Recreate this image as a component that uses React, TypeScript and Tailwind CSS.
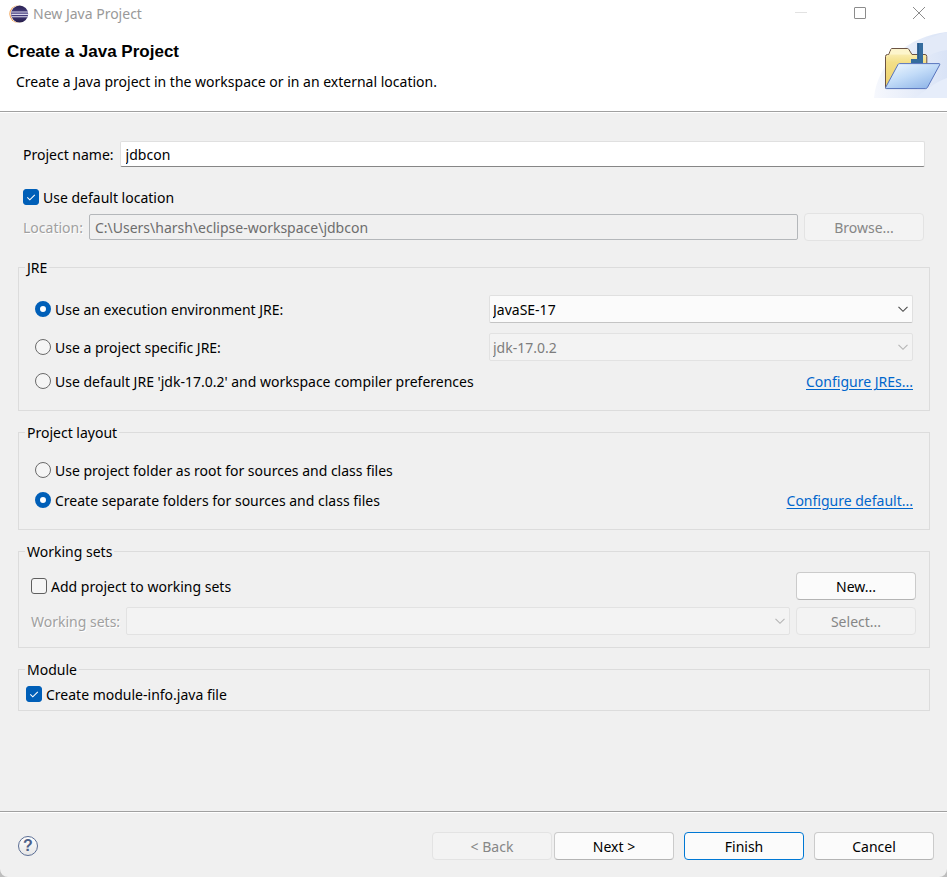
import { useState } from 'react';
import type { ButtonHTMLAttributes, InputHTMLAttributes, ReactNode, SelectHTMLAttributes } from 'react';
import clsx from 'clsx';

function EclipseIcon() {
  return (
    <svg className="h-5 w-5 shrink-0" viewBox="0 0 20 20" aria-hidden="true">
      <defs>
        <linearGradient id="sphere" x1="0" y1="0" x2="0" y2="1">
          <stop offset="0" stopColor="#2a2150" />
          <stop offset="0.5" stopColor="#4a4185" />
          <stop offset="1" stopColor="#241c48" />
        </linearGradient>
      </defs>
      <circle cx="9.2" cy="10" r="8.8" fill="#f0953c" />
      <circle cx="10.3" cy="10" r="9" fill="#fff" />
      <circle cx="10.6" cy="10" r="8.6" fill="url(#sphere)" />
      <path d="M2.4 8h16.600M2.4 10.400h16.600M2.6 12.800h16.200" stroke="#dcd9ec" strokeWidth="1.1" />
    </svg>
  );
}

function FolderBanner() {
  return (
    <svg className="h-[66px] w-[73px] shrink-0" viewBox="1 0 73 66" aria-hidden="true">
      <defs>
        <linearGradient id="wash" x1="0" y1="0" x2="1" y2="0">
          <stop offset="0" stopColor="#f6f8fd" />
          <stop offset="1" stopColor="#d9e3f6" />
        </linearGradient>
        <linearGradient id="back" x1="0" y1="0" x2="0" y2="1">
          <stop offset="0" stopColor="#fdf6cf" />
          <stop offset="0.35" stopColor="#f3df87" />
          <stop offset="1" stopColor="#edcf6a" />
        </linearGradient>
        <linearGradient id="front" x1="0" y1="0" x2="0.8" y2="1">
          <stop offset="0" stopColor="#f3faff" />
          <stop offset="0.5" stopColor="#c3dcf8" />
          <stop offset="1" stopColor="#8fb5e8" />
        </linearGradient>
      </defs>
      <path d="M1 66C4 30 36 4 74 0v66z" fill="url(#wash)" />
      <path d="M42 66c10-7 20-16 32-20v20z" fill="#e6edfa" />
      <path d="M50 10c8-5 15-8 24-10v18c-9 1-16 4-23 8z" fill="#e3eaf8" />
      <path
        d="M12.5 56V24.500q0-2 2-2h1.200l2.200-5.200q.3-.8 1-.8h15.600q.8 0 1.200.7l3.300 5.300h13q1.800 0 1.800 2V40L44 56z"
        fill="url(#back)"
        stroke="#6b5344"
      />
      <path d="M16.500 22.500l2-5.300h16l3 5.300z" fill="#fdf5cc" />
      <path d="M44.300 11H50v21H38v-5h6.300z" fill="#356c9e" />
      <path d="M44.300 11h1.500v16h-1.500z" fill="#28588a" />
      <path
        d="M26.500 31.600H66q1.200 0 .7 1.200L54.500 55.300q-.7 1.300-1.800 1.300H13.500q-1.500 0-.8-1.300L25 32.500q.5-.9 1.500-.9z"
        fill="url(#front)"
        stroke="#5874bd"
      />
    </svg>
  );
}

function Chevron({ disabled }: { disabled?: boolean }) {
  return (
    <svg
      className={clsx(
        'pointer-events-none absolute top-1/2 right-1 h-3 w-3 -translate-y-1/2',
        disabled ? 'text-[#b4b4b4]' : 'text-[#4a4a4a]'
      )}
      viewBox="0 0 12 12"
      fill="none"
      stroke="currentColor"
      aria-hidden="true"
    >
      <path d="M1.500 3.800L6 8.300l4.500-4.500" strokeWidth="1.100" />
    </svg>
  );
}

function Combo({ className, children, disabled, ...props }: SelectHTMLAttributes<HTMLSelectElement>) {
  return (
    <div className={clsx('relative', className)}>
      <select
        disabled={disabled}
        className={clsx(
          'block h-7 w-full appearance-none rounded-xs border pt-0.5 pr-6 pl-[3px] opacity-100 outline-none',
          disabled ? 'border-[#e2e2e2] bg-[#f3f3f3] text-[#7d7d7d]' : 'border-[#e0e0e0] border-b-[#c4c4c4] bg-[#fbfbfb]'
        )}
        {...props}
      >
        {children}
      </select>
      <Chevron disabled={disabled} />
    </div>
  );
}

type ToggleProps = InputHTMLAttributes<HTMLInputElement> & { label: string };

function Checkbox({ label, ...props }: ToggleProps) {
  return (
    <label className="flex h-5 items-center gap-1">
      <span className="relative flex">
        <input
          type="checkbox"
          className="peer h-4 w-4 appearance-none rounded-[3px] border border-[#5f5f5f] bg-[#f5f5f5] checked:border-[#005fb8] checked:bg-[#005fb8]"
          {...props}
        />
        <svg
          className="pointer-events-none absolute inset-0 hidden h-4 w-4 peer-checked:block"
          viewBox="0 0 16 16"
          fill="none"
          stroke="#fff"
          aria-hidden="true"
        >
          <path d="M4.300 8.300l2.500 2.500 5-5" strokeWidth="1.100" />
        </svg>
      </span>
      <span className="pt-0.5">{label}</span>
    </label>
  );
}

function Radio({ label, ...props }: ToggleProps) {
  return (
    <label className="flex h-5 items-center gap-1">
      <input
        type="radio"
        className="h-4 w-4 appearance-none rounded-full border border-[#6a6a6a] bg-[#f5f5f5] checked:border-[5px] checked:border-[#005fb8] checked:bg-white"
        {...props}
      />
      <span className="pt-0.5">{label}</span>
    </label>
  );
}

type PushButtonProps = ButtonHTMLAttributes<HTMLButtonElement> & { primary?: boolean };

function PushButton({ primary, disabled, children, ...props }: PushButtonProps) {
  return (
    <button
      type="button"
      disabled={disabled}
      className={clsx(
        'h-7 w-[120px] shrink-0 rounded border pt-0.5',
        disabled && 'border-[#e3e3e3] bg-[#f3f3f3] text-[#868686]',
        !disabled && primary && 'border-[#0078d4] bg-[#fbfbfb]',
        !disabled && !primary && 'border-[#cbcbcb] border-b-[#b4b4b4] bg-[#fbfbfb]'
      )}
      {...props}
    >
      {children}
    </button>
  );
}

function Group({ title, className, children }: { title: string; className: string; children: ReactNode }) {
  return (
    <fieldset className="min-w-0 border border-[#dcdcdc] px-1.5">
      <legend className="h-5 px-0.5 leading-[22px]">{title}</legend>
      <div className={className}>{children}</div>
    </fieldset>
  );
}

const linkClass = 'pt-0.5 text-[#0066cc] underline underline-offset-2';
const disabledLabel = 'text-[#a0a0a0] [text-shadow:1px_1px_0_#fff]';

export default function App() {
  const [name, setName] = useState('jdbcon');
  const [useDefault, setUseDefault] = useState(true);
  const [jre, setJre] = useState('env');
  const [layout, setLayout] = useState('separate');
  const [addToSets, setAddToSets] = useState(false);
  const [moduleInfo, setModuleInfo] = useState(true);

  return (
    <div className="min-h-screen bg-[#bdbdbd]">
      <div className="flex min-h-screen flex-col overflow-hidden rounded-b-lg bg-[#f0f0f0] font-['Noto_Sans','Open_Sans',sans-serif] text-[14px] leading-5 text-black">
        <header className="border-b border-[#a0a0a0] bg-white">
          <div className="flex h-7 items-center justify-between pl-[9px]">
            <div className="flex items-center gap-1 text-[#999]">
              <EclipseIcon />
              <span>New Java Project</span>
            </div>
            <div className="flex gap-[35px] pr-4 pb-0.5">
              <button type="button" aria-label="Minimize" disabled className="h-6 w-6 text-[#e2e2e2]">
                <svg className="mx-auto h-3 w-3" viewBox="0 0 12 12" stroke="currentColor">
                  <path d="M0 5.500h12" />
                </svg>
              </button>
              <button type="button" aria-label="Maximize" className="h-6 w-6 text-[#8c8c8c]">
                <svg className="mx-auto h-3 w-3" viewBox="0 0 12 12" fill="none" stroke="currentColor">
                  <rect x="0.5" y="0.5" width="11" height="11" rx="0.5" />
                </svg>
              </button>
              <button type="button" aria-label="Close" className="h-6 w-6 text-[#8c8c8c]">
                <svg className="mx-auto h-3 w-3" viewBox="0 0 12 12" fill="none" stroke="currentColor">
                  <path d="M0 0l12 12M12 0L0 12" />
                </svg>
              </button>
            </div>
          </div>
          <div className="flex items-start justify-between pt-1 pb-[13px]">
            <div className="pt-2 pl-[7px]">
              <h1 className="font-['Liberation_Sans',Arial,sans-serif] text-[17px] leading-6 font-bold">
                Create a Java Project
              </h1>
              <p className="pt-2 pl-[9px]">Create a Java project in the workspace or in an external location.</p>
            </div>
            <FolderBanner />
          </div>
        </header>

        <main className="flex-1 border-t border-white pt-7 pr-[17px] pl-[18px]">
          <div className="flex items-center gap-[6px] pr-[5px] pl-[5px]">
            <label htmlFor="project-name" className="pt-0.5">
              Project name:
            </label>
            <input
              id="project-name"
              type="text"
              value={name}
              onChange={(e) => setName(e.target.value)}
              className="h-[26px] min-w-0 flex-1 rounded-xs border border-[#e0e0e0] border-b-[#868686] bg-white px-[5px] outline-none"
            />
          </div>

          <div className="pt-5 pl-[5px]">
            <Checkbox
              label="Use default location"
              checked={useDefault}
              onChange={(e) => setUseDefault(e.target.checked)}
            />
          </div>
          <div className="flex items-center gap-[6px] pt-[6px] pr-[6px] pl-[5px]">
            <label htmlFor="location" className={clsx('pt-0.5', useDefault && disabledLabel)}>
              Location:
            </label>
            <input
              id="location"
              type="text"
              disabled={useDefault}
              defaultValue="C:\Users\harsh\eclipse-workspace\jdbcon"
              className="h-[26px] min-w-0 flex-1 rounded-xs border border-[#b4b7ba] bg-[#f0f0f0] px-[5px] text-[#6d6d6d] outline-none"
            />
            <PushButton disabled={useDefault}>Browse...</PushButton>
          </div>

          <div className="flex flex-col gap-[11px] pt-4">
            <Group title="JRE" className="px-2.5 pb-[19px]">
              <div className="grid grid-cols-[454px_1fr] items-center gap-y-[10px] pt-[18px]">
                <Radio
                  name="jre"
                  label="Use an execution environment JRE:"
                  checked={jre === 'env'}
                  onChange={() => setJre('env')}
                />
                <Combo aria-label="Execution environment" disabled={jre !== 'env'}>
                  <option>JavaSE-17</option>
                </Combo>
                <Radio
                  name="jre"
                  label="Use a project specific JRE:"
                  checked={jre === 'project'}
                  onChange={() => setJre('project')}
                />
                <Combo aria-label="Project specific JRE" disabled={jre !== 'project'}>
                  <option>jdk-17.0.2</option>
                </Combo>
                <Radio
                  name="jre"
                  label="Use default JRE 'jdk-17.0.2' and workspace compiler preferences"
                  checked={jre === 'default'}
                  onChange={() => setJre('default')}
                />
                <div className="flex h-5 items-center justify-end">
                  <a href="#jres" className={linkClass}>
                    Configure JREs...
                  </a>
                </div>
              </div>
            </Group>

            <Group title="Project layout" className="px-2.5 pb-[19px]">
              <div className="flex flex-col gap-[10px] pt-[18px]">
                <Radio
                  name="layout"
                  label="Use project folder as root for sources and class files"
                  checked={layout === 'root'}
                  onChange={() => setLayout('root')}
                />
                <div className="flex h-5 items-center justify-between">
                  <Radio
                    name="layout"
                    label="Create separate folders for sources and class files"
                    checked={layout === 'separate'}
                    onChange={() => setLayout('separate')}
                  />
                  <a href="#layout" className={linkClass}>
                    Configure default...
                  </a>
                </div>
              </div>
            </Group>

            <Group title="Working sets" className="pr-[7px] pb-3 pl-1.5">
              <div className="flex flex-col gap-[7px] pt-[11px]">
                <div className="flex items-center justify-between">
                  <Checkbox
                    label="Add project to working sets"
                    checked={addToSets}
                    onChange={(e) => setAddToSets(e.target.checked)}
                  />
                  <PushButton>New...</PushButton>
                </div>
                <div className="flex items-center gap-[6px]">
                  <label htmlFor="working-sets" className={clsx('pt-0.5', !addToSets && disabledLabel)}>
                    Working sets:
                  </label>
                  <Combo id="working-sets" className="min-w-0 flex-1" disabled={!addToSets} />
                  <PushButton disabled={!addToSets}>Select...</PushButton>
                </div>
              </div>
            </Group>

            <Group title="Module" className="px-px pb-[6px]">
              <div className="pt-[5px]">
                <Checkbox
                  label="Create module-info.java file"
                  checked={moduleInfo}
                  onChange={(e) => setModuleInfo(e.target.checked)}
                />
              </div>
            </Group>
          </div>
        </main>

        <footer className="border-t border-[#a0a0a0]">
          <div className="flex items-center justify-between border-t border-white pt-[19px] pr-[13px] pb-[17px] pl-[18px]">
            <button
              type="button"
              aria-label="Help"
              className="h-5 w-5 rounded-full border border-[#5a6d94] bg-linear-to-b from-white to-[#e6e6e6] font-['Liberation_Sans',Arial,sans-serif] text-[16px] leading-[18px] font-bold text-[#4d6189]"
            >
              ?
            </button>
            <div className="flex gap-[10px]">
              <div className="flex gap-[2px]">
                <PushButton disabled>&lt; Back</PushButton>
                <PushButton>Next &gt;</PushButton>
              </div>
              <PushButton primary>Finish</PushButton>
              <PushButton>Cancel</PushButton>
            </div>
          </div>
        </footer>
      </div>
    </div>
  );
}
